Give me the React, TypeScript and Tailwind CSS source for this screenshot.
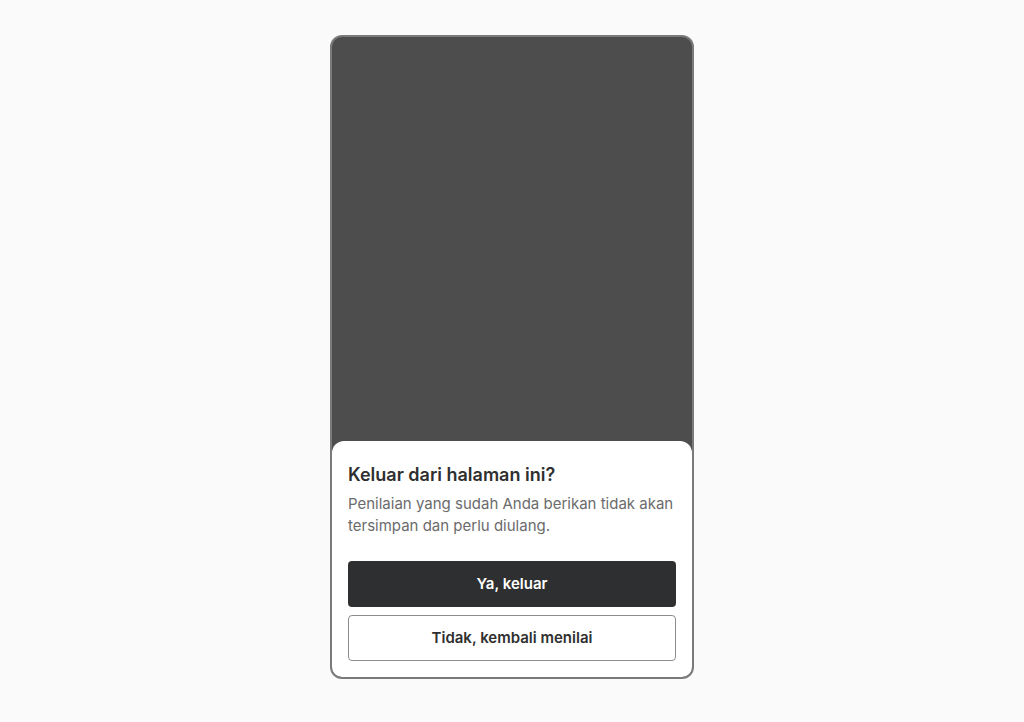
export default function App() {
  return (
    <div className="flex min-h-[722px] w-full justify-center bg-[#fafafa] pt-[35px] font-['Inter',sans-serif]">
      <div className="flex h-[644px] w-[364px] flex-col overflow-hidden rounded-[12px] border-2 border-[#7a7a7a] bg-[#4d4d4d]">
        <div className="flex-1" />
        <div className="rounded-t-[12px] bg-white px-4 pb-4 pt-5">
          <h2 className="text-[18px] leading-[28px] font-semibold text-[#2f2f2f]">
            Keluar dari halaman ini?
          </h2>
          <p className="mt-1 text-[15px] leading-[22px] text-[#6b6b6b]">
            Penilaian yang sudah Anda berikan tidak akan tersimpan dan perlu diulang.
          </p>
          <div className="mt-6 flex flex-col gap-2">
            <button className="h-[46px] w-full rounded-[4px] bg-[#2e2f31] text-[15px] font-semibold text-white">
              Ya, keluar
            </button>
            <button className="h-[46px] w-full rounded-[4px] border border-[#8c8c8c] bg-white text-[15px] font-semibold text-[#2f2f2f]">
              Tidak, kembali menilai
            </button>
          </div>
        </div>
      </div>
    </div>
  );
}
